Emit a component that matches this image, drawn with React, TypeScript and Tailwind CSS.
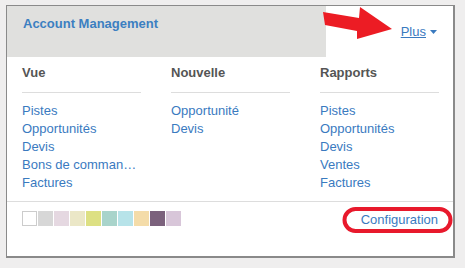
import React from "react";

const columns = [
  { title: "Vue", links: ["Pistes", "Opportunités", "Devis", "Bons de comman…", "Factures"] },
  { title: "Nouvelle", links: ["Opportunité", "Devis"] },
  { title: "Rapports", links: ["Pistes", "Opportunités", "Devis", "Ventes", "Factures"] },
];

const swatches = [
  "bg-white border border-[#cccccc]",
  "bg-[#d7d7d7]",
  "bg-[#e5d8e1]",
  "bg-[#ebe7c7]",
  "bg-[#dde083]",
  "bg-[#a9d4cb]",
  "bg-[#b7e3e9]",
  "bg-[#f4dca9]",
  "bg-[#7b617c]",
  "bg-[#d8c6d9]",
];

export default function App() {
  return (
    <div className="relative w-[465px] h-[268px] bg-[#efeeee] pt-[5px] pl-[6px] font-['Liberation_Sans',Arial,sans-serif] text-[13px] overflow-hidden">
      {/* Card */}
      <div className="w-[449px] h-[253px] bg-white border-l border-t border-r-2 border-b-2 border-[#8a8a8a] flex flex-col">
        {/* Header */}
        <div className="flex items-start">
          <div className="w-[319px] h-[51px] bg-[#e0e0de] pl-[16px] pt-[8px]">
            <span className="font-bold text-[#3c7fc1] leading-[18px]">Account Management</span>
          </div>
          <div className="flex-1 flex justify-end pr-[16px] pt-[17px]">
            <a className="text-[#3a7abf] leading-[18px] flex items-center gap-[4px] cursor-pointer">
              <span className="underline">Plus</span>
              <svg width="7" height="4" viewBox="0 0 7 4">
                <polygon points="0,0 7,0 3.5,4" fill="#3a7abf" />
              </svg>
            </a>
          </div>
        </div>

        {/* Columns */}
        <div className="flex gap-[30px] pl-[15px] pt-[7px]">
          {columns.map((col) => (
            <div key={col.title} className="w-[119px]">
              <div className="font-bold text-[#555555] leading-[18px] pb-[10px] border-b border-[#dddddd]">
                {col.title}
              </div>
              <ul className="mt-[9px]">
                {col.links.map((l) => (
                  <li key={l} className="text-[#3a7abf] leading-[18px] whitespace-nowrap">
                    {l}
                  </li>
                ))}
              </ul>
            </div>
          ))}
        </div>

        <div className="mt-auto mb-[54px] border-t border-[#dddddd]"></div>
      </div>

      {/* Footer content sits over card bottom */}
      <div className="absolute left-[7px] top-[203px] w-[446px] flex items-start justify-between pl-[15px] pr-[15px] pt-[8px]">
        <div className="flex gap-[1px]">
          {swatches.map((s, i) => (
            <div key={i} className={`w-[15px] h-[15px] ${s}`}></div>
          ))}
        </div>
        <a className="text-[#3a7abf] leading-[18px] cursor-pointer">Configuration</a>
      </div>

      {/* Annotations */}
      <svg className="absolute left-0 top-0 pointer-events-none" width="465" height="268" viewBox="0 0 465 268">
        <polygon points="323,12 359,18 360,7 392,29 357,39 357,31 325,25" fill="#ec1c24" />
        <rect x="344.5" y="209" width="106" height="22" rx="11" ry="11" fill="none" stroke="#e8192c" strokeWidth="4" />
      </svg>
    </div>
  );
}
